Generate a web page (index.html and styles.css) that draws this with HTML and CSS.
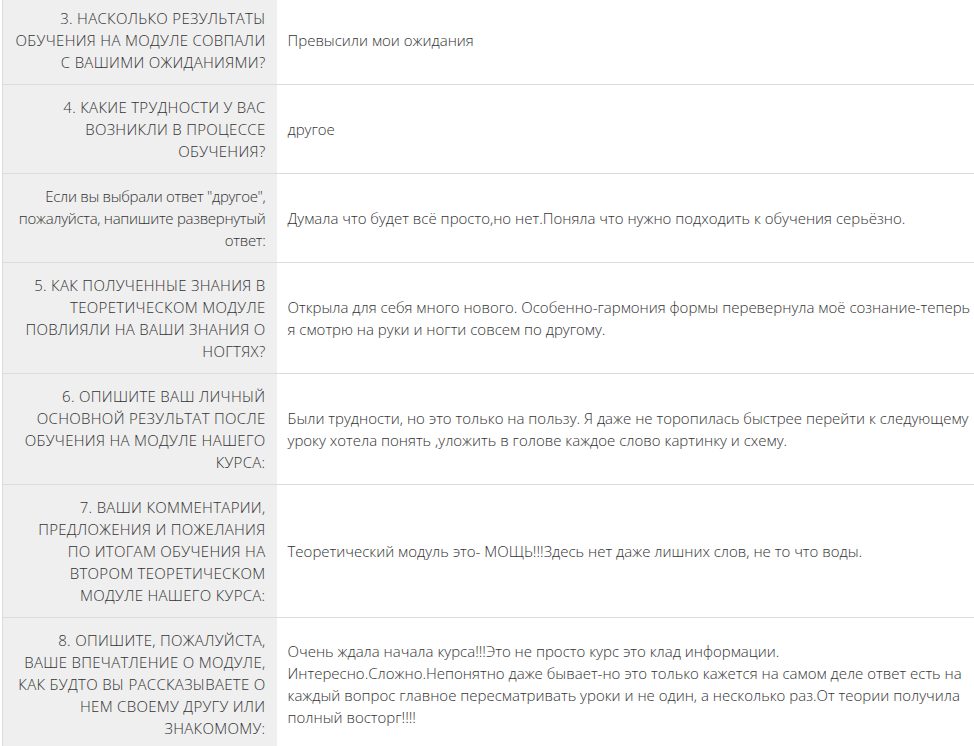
FILE: index.html
```html
<!DOCTYPE html>
<html lang="ru">
<head>
  <meta charset="UTF-8" />
  <meta name="viewport" content="width=device-width, initial-scale=1" />
  <title>Ответы анкеты</title>
  <link rel="stylesheet" href="styles.css">
</head>
<body>
  <!-- Survey Answers -->
  <div class="answers-wrap">
    <table class="answers">
      <tr>
        <th class="question">3. НАСКОЛЬКО РЕЗУЛЬТАТЫ ОБУЧЕНИЯ НА МОДУЛЕ СОВПАЛИ С ВАШИМИ ОЖИДАНИЯМИ?</th>
        <td class="answer">Превысили мои ожидания</td>
      </tr>
      <tr>
        <th class="question">4. КАКИЕ ТРУДНОСТИ У ВАС ВОЗНИКЛИ В ПРОЦЕССЕ ОБУЧЕНИЯ?</th>
        <td class="answer">другое</td>
      </tr>
      <tr>
        <th class="question question-plain">Если вы выбрали ответ "другое", пожалуйста, напишите развернутый ответ:</th>
        <td class="answer">Думала что будет всё просто,но нет.Поняла что нужно подходить к обучения серьёзно.</td>
      </tr>
      <tr>
        <th class="question">5. КАК ПОЛУЧЕННЫЕ ЗНАНИЯ В ТЕОРЕТИЧЕСКОМ МОДУЛЕ ПОВЛИЯЛИ НА ВАШИ ЗНАНИЯ О НОГТЯХ?</th>
        <td class="answer">Открыла для себя много нового. Особенно-гармония формы перевернула моё сознание-теперь я смотрю на руки и ногти совсем по другому.</td>
      </tr>
      <tr>
        <th class="question">6. ОПИШИТЕ ВАШ ЛИЧНЫЙ ОСНОВНОЙ РЕЗУЛЬТАТ ПОСЛЕ ОБУЧЕНИЯ НА МОДУЛЕ НАШЕГО КУРСА:</th>
        <td class="answer">Были трудности, но это только на пользу. Я даже не торопилась быстрее перейти к следующему уроку хотела понять ,уложить в голове каждое слово картинку и схему.</td>
      </tr>
      <tr>
        <th class="question">7. ВАШИ КОММЕНТАРИИ, ПРЕДЛОЖЕНИЯ И ПОЖЕЛАНИЯ ПО ИТОГАМ ОБУЧЕНИЯ НА ВТОРОМ ТЕОРЕТИЧЕСКОМ МОДУЛЕ НАШЕГО КУРСА:</th>
        <td class="answer">Теоретический модуль это- МОЩЬ!!!Здесь нет даже лишних слов, не то что воды.</td>
      </tr>
      <tr>
        <th class="question">8. ОПИШИТЕ, ПОЖАЛУЙСТА, ВАШЕ ВПЕЧАТЛЕНИЕ О МОДУЛЕ, КАК БУДТО ВЫ РАССКАЗЫВАЕТЕ О НЕМ СВОЕМУ ДРУГУ ИЛИ ЗНАКОМОМУ:</th>
        <td class="answer">Очень ждала начала курса!!!Это не просто курс это клад информации. Интересно.Сложно.Непонятно даже бывает-но это только кажется на самом деле ответ есть на каждый вопрос главное пересматривать уроки и не один, а несколько раз.От теории получила полный восторг!!!!</td>
      </tr>
    </table>
  </div>
</body>
</html>
```

FILE: styles.css
```css
* {
  margin: 0;
  padding: 0;
  box-sizing: border-box;
}

body {
  font-family: 'Open Sans', 'Noto Sans', sans-serif;
  font-weight: 300;
  font-size: 15px;
  line-height: 22px;
  color: #333333;
  background: #ffffff;
  overflow: hidden;
}

/* Answers Table */
.answers-wrap {
  margin-top: -4px;
  padding-left: 2px;
}

.answers {
  border-collapse: collapse;
  border-left: 1px solid #dcdcdc;
  table-layout: fixed;
  width: 988px;
}

.answers tr {
  border-bottom: 1px solid #dcdcdc;
}

.question {
  width: 274px;
  background: #efefef;
  text-align: right;
  font-weight: 300;
  letter-spacing: 0.3px;
  padding: 11px 11px 11px 12px;
  vertical-align: middle;
}

.question-plain {
  letter-spacing: -0.3px;
}

.answer {
  padding: 11px 11px;
  vertical-align: middle;
  text-align: left;
}
```
